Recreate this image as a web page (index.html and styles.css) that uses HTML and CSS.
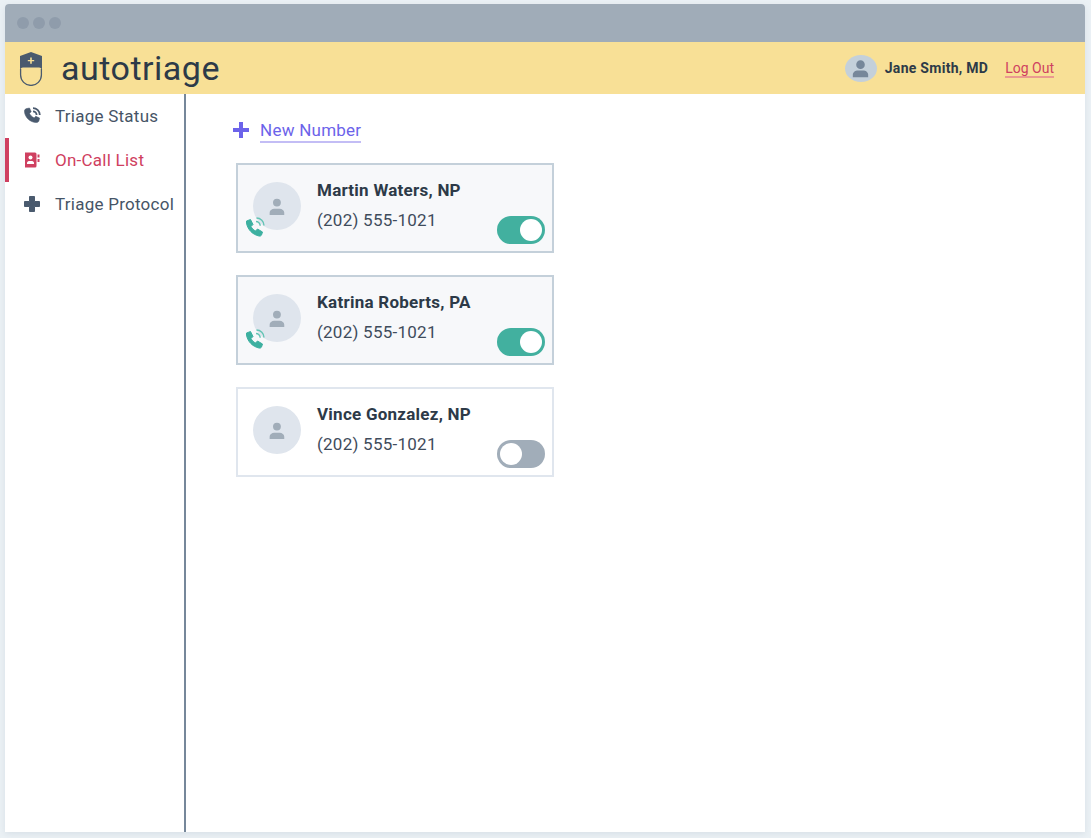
FILE: index.html
```html
<!DOCTYPE html>
<html lang="en">
<head>
<meta charset="utf-8">
<title>autotriage</title>
<link rel="stylesheet" href="styles.css">
</head>
<body>
<div class="window">
  <div class="titlebar"><i class="dot"></i><i class="dot"></i><i class="dot"></i></div>
  <header class="header">
    <svg class="logo" viewBox="0 0 24 36" width="24" height="36">
      <path d="M1 6 12 2l11 4v15c0-2-1.200-3.500-3-3.500H4C2.200 17.500 1 19 1 21z" fill="#4a5a6e"/>
      <path d="M1.600 19v6a10.400 10.400 0 0 0 20.800 0v-6" fill="none" stroke="#4a5a6e" stroke-width="1.300"/>
      <path d="M11.200 7.500h1.600v2.400h2.400v1.400h-2.400v2.400h-1.600v-2.400H8.800V9.900h2.400z" fill="#f8e096"/>
    </svg>
    <div class="brand">autotriage</div>
    <div class="user">
      <span class="user-avatar">
        <svg viewBox="0 0 24 24" width="23" height="23"><path d="M12 3.500a4.500 4.500 0 1 1 0 9 4.500 4.500 0 0 1 0-9zM4 21v-2.500C4 15.500 7 14 9 14h6c2 0 5 1.500 5 4.500V21z" fill="#76879a"/></svg>
      </span>
      <span class="user-name">Jane Smith, MD</span>
      <a class="logout">Log Out</a>
    </div>
  </header>
  <div class="body">
    <nav class="sidebar">
      <a class="nav-item">
        <svg class="nav-icon" viewBox="0 0 18 18" width="18" height="18"><path d="M4 1.500 6.500 1l1.700 3.800-1.700 1.500c.8 2 2.600 3.800 4.700 4.700l1.500-1.700 3.800 1.700-.5 2.500c-.3 1.300-1.200 2-2.500 2C7 15.500 1.500 10 1.500 4c0-1.300 1-2.200 2.500-2.500z" fill="#4a5a6e" stroke="#4a5a6e" stroke-width=".6"/><path d="M10 1.200a6.800 6.800 0 0 1 6.800 6.800M10 4.400A3.600 3.600 0 0 1 13.600 8" fill="none" stroke="#4a5a6e" stroke-width="1.800"/></svg>
        <span>Triage Status</span>
      </a>
      <a class="nav-item active">
        <svg class="nav-icon" viewBox="0 0 18 18" width="18" height="18"><path d="M2 1.500h10a1.500 1.500 0 0 1 1.500 1.500v12a1.500 1.500 0 0 1-1.500 1.500H2z" fill="#cf4060"/><path d="M14.500 3.500h2v3h-2zM14.500 8h2v3h-2z" fill="#cf4060"/><circle cx="7.500" cy="6.500" r="2" fill="#fff"/><path d="M4 13v-1c0-1.500 1.500-2 2.500-2h2c1 0 2.500.5 2.500 2v1z" fill="#fff"/></svg>
        <span>On-Call List</span>
      </a>
      <a class="nav-item">
        <svg class="nav-icon" viewBox="0 0 18 18" width="18" height="18"><path d="M6.500 1.500h5v5h5v5h-5v5h-5v-5h-5v-5h5z" fill="#4a5a6e" stroke="#4a5a6e" stroke-linejoin="round"/></svg>
        <span>Triage Protocol</span>
      </a>
    </nav>
    <main class="main">
      <a class="new-number">
        <svg class="plus" viewBox="0 0 16 16" width="16" height="16"><path d="M6 0h4v6h6v4h-6v6H6v-6H0V6h6z" fill="#6c63ea"/></svg>
        <span class="new-label">New Number</span>
      </a>
      <div class="card on">
        <div class="avatar">
          <svg viewBox="0 0 24 24" width="27" height="27"><path d="M11.500 5a3.500 3.500 0 1 1 0 7 3.500 3.500 0 0 1 0-7zM5 19.500v-2c0-2 2-3.500 4-3.500h5c2 0 4 1.500 4 3.500v2z" fill="#a1adb9"/></svg>
          <svg class="call" viewBox="0 0 20 20" width="20" height="20"><path d="M1.500 4 5.500 2.500 8 7.500 6 9.500C7 11.500 8.500 13 10.500 14l2-2 5 3-1 3c-.5 1-1.500 1.300-2.500 1C7 17.500 2.500 12 1.500 6z" fill="#3db0a0" stroke="#3db0a0" stroke-width="1" stroke-linejoin="round"/><path d="M11.500 1a7.500 7.500 0 0 1 7.500 7.500M11 4.500A4.200 4.200 0 0 1 15.200 8.700" fill="none" stroke="#62c4b4" stroke-width="1.400"/></svg>
        </div>
        <div class="info">
          <div class="name">Martin Waters, NP</div>
          <div class="phone">(202) 555-1021</div>
        </div>
        <span class="toggle"><i class="knob"></i></span>
      </div>
      <div class="card on">
        <div class="avatar">
          <svg viewBox="0 0 24 24" width="27" height="27"><path d="M11.500 5a3.500 3.500 0 1 1 0 7 3.500 3.500 0 0 1 0-7zM5 19.500v-2c0-2 2-3.500 4-3.500h5c2 0 4 1.500 4 3.500v2z" fill="#a1adb9"/></svg>
          <svg class="call" viewBox="0 0 20 20" width="20" height="20"><path d="M1.500 4 5.500 2.500 8 7.500 6 9.500C7 11.500 8.500 13 10.500 14l2-2 5 3-1 3c-.5 1-1.500 1.300-2.500 1C7 17.500 2.500 12 1.500 6z" fill="#3db0a0" stroke="#3db0a0" stroke-width="1" stroke-linejoin="round"/><path d="M11.500 1a7.500 7.500 0 0 1 7.500 7.500M11 4.500A4.200 4.200 0 0 1 15.200 8.700" fill="none" stroke="#62c4b4" stroke-width="1.400"/></svg>
        </div>
        <div class="info">
          <div class="name">Katrina Roberts, PA</div>
          <div class="phone">(202) 555-1021</div>
        </div>
        <span class="toggle"><i class="knob"></i></span>
      </div>
      <div class="card">
        <div class="avatar">
          <svg viewBox="0 0 24 24" width="27" height="27"><path d="M11.500 5a3.500 3.500 0 1 1 0 7 3.500 3.500 0 0 1 0-7zM5 19.500v-2c0-2 2-3.500 4-3.500h5c2 0 4 1.500 4 3.500v2z" fill="#a1adb9"/></svg>
        </div>
        <div class="info">
          <div class="name">Vince Gonzalez, NP</div>
          <div class="phone">(202) 555-1021</div>
        </div>
        <span class="toggle"><i class="knob"></i></span>
      </div>
    </main>
  </div>
</div>
</body>
</html>
```
FILE: styles.css
```css
* { box-sizing: border-box; }
html, body { height: 100%; }
body {
  margin: 0;
  padding: 4px 6px 6px 5px;
  background: #ebf1f5;
  font-family: Roboto, "Liberation Sans", sans-serif;
  color: #2d3a48;
  overflow: hidden;
}
.window {
  height: 828px;
  display: flex;
  flex-direction: column;
  background: #fff;
  border-radius: 4px 4px 0 0;
  overflow: hidden;
  box-shadow: 0 2px 6px rgba(160, 174, 192, .25);
}
.titlebar {
  height: 38px;
  flex: none;
  display: flex;
  align-items: center;
  gap: 4px;
  padding: 0 12px;
  background: #a0acb8;
}
.dot { width: 12px; height: 12px; border-radius: 50%; background: #8f9cab; }
.header {
  height: 52px;
  flex: none;
  display: flex;
  align-items: center;
  padding: 0 31px 0 14px;
  background: #f8e096;
}
.logo { flex: none; }
.brand {
  margin-left: 18px;
  font-size: 34px;
  letter-spacing: .5px;
  color: #2d3a48;
}
.user { margin-left: auto; display: flex; align-items: center; }
.user-avatar {
  width: 32px; height: 27px;
  border-radius: 50%;
  background: #c4d0da;
  display: flex; align-items: center; justify-content: center;
}
.user-name { margin-left: 8px; font-size: 14px; font-weight: 700; letter-spacing: .28px; }
.logout {
  margin: 2px 0 0 17px;
  font-size: 14px;
  line-height: 16px;
  color: #cf4060;
  border-bottom: 2px solid #eb9a8f;
}
.body { flex: 1; display: flex; min-height: 0; }
.sidebar {
  width: 181px;
  flex: none;
  border-right: 2px solid #76879a;
}
.nav-item {
  height: 44px;
  display: flex;
  align-items: center;
  gap: 14px;
  padding-left: 18px;
  font-size: 17px;
  letter-spacing: .25px;
  color: #465466;
}
.nav-item.active {
  color: #cf4060;
  border-left: 4px solid #cf4060;
  padding-left: 14px;
}
.nav-icon { flex: none; }
.main { flex: 1; padding: 26px 0 0 47px; }
.new-number { display: flex; align-items: center; gap: 11px; height: 22px; }
.plus { flex: none; margin-top: -2px; }
.new-label {
  font-size: 17px;
  line-height: 21px;
  letter-spacing: .25px;
  color: #6c63ea;
  border-bottom: 2px solid #c3bdf5;
}
.card {
  position: relative;
  width: 318px;
  height: 90px;
  margin: 0 0 22px 3px;
  padding: 17px 0 0 15px;
  display: flex;
  border: 2px solid #e0e6ee;
  background: #fff;
}
.new-number + .card { margin-top: 21px; }
.card.on { background: #f7f8fa; border-color: #c4d0da; }
.avatar {
  position: relative;
  width: 48px; height: 48px;
  flex: none;
  border-radius: 50%;
  background: #dfe5ed;
  display: flex; align-items: center; justify-content: center;
}
.call { position: absolute; left: -8px; top: 35px; }
.info { margin-left: 16px; margin-top: -3px; }
.name { font-size: 17px; line-height: 22px; font-weight: 700; letter-spacing: .25px; }
.phone { margin-top: 8px; font-size: 17px; line-height: 22px; letter-spacing: .25px; color: #3f4c5c; }
.toggle {
  position: absolute;
  right: 7px; bottom: 7px;
  width: 48px; height: 28px;
  border-radius: 14px;
  background: #a1adb9;
  padding: 3px;
}
.knob { display: block; width: 22px; height: 22px; border-radius: 50%; background: #fff; }
.card.on .toggle { background: #42b09f; }
.card.on .knob { margin-left: 20px; }
```
